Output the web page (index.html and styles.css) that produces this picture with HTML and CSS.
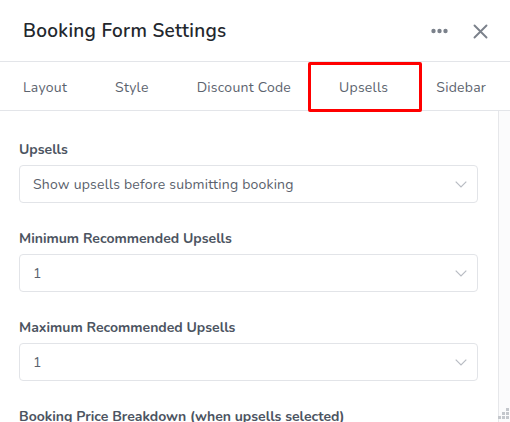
FILE: index.html
```html
<!DOCTYPE html>
<html>
<head>
<meta charset="utf-8">
<link rel="stylesheet" href="styles.css">
</head>
<body>
<div class="panel">
  <header class="header">
    <h1 class="title">Booking Form Settings</h1>
    <div class="actions">
      <svg class="dots" width="17" height="6" viewBox="0 0 17 6"><circle cx="2.5" cy="3" r="2.2" fill="#7b818b"/><circle cx="8.5" cy="3" r="2.2" fill="#7b818b"/><circle cx="14.5" cy="3" r="2.2" fill="#7b818b"/></svg>
      <svg class="close" width="15" height="15" viewBox="0 0 15 15"><path d="M1.5 1.5L13.5 13.5M13.5 1.5L1.5 13.5" stroke="#7b818b" stroke-width="1.9" stroke-linecap="round"/></svg>
    </div>
  </header>
  <nav class="tabs">
    <span class="tab">Layout</span>
    <span class="tab">Style</span>
    <span class="tab">Discount Code</span>
    <span class="tab active">Upsells</span>
    <span class="tab">Sidebar</span>
    <div class="highlight"></div>
  </nav>
  <div class="body">
    <div class="content">
      <div class="field">
        <div class="label">Upsells</div>
        <div class="select"><span>Show upsells before submitting booking</span><svg class="chev" width="12" height="7" viewBox="0 0 12 7"><path d="M0.7 0.7L6 6L11.3 0.7" fill="none" stroke="#b8bcc3" stroke-width="1.2"/></svg></div>
      </div>
      <div class="field">
        <div class="label">Minimum Recommended Upsells</div>
        <div class="select"><span>1</span><svg class="chev" width="12" height="7" viewBox="0 0 12 7"><path d="M0.7 0.7L6 6L11.3 0.7" fill="none" stroke="#b8bcc3" stroke-width="1.2"/></svg></div>
      </div>
      <div class="field">
        <div class="label">Maximum Recommended Upsells</div>
        <div class="select"><span>1</span><svg class="chev" width="12" height="7" viewBox="0 0 12 7"><path d="M0.7 0.7L6 6L11.3 0.7" fill="none" stroke="#b8bcc3" stroke-width="1.2"/></svg></div>
      </div>
      <div class="field">
        <div class="label">Booking Price Breakdown (when upsells selected)</div>
      </div>
    </div>
    <div class="scrolltrack">
      <svg class="grip" width="12" height="12" viewBox="0 0 12 12"><rect x="8" y="0" width="3" height="3" fill="#c4c7cc"/><rect x="4" y="4" width="3" height="3" fill="#c4c7cc"/><rect x="8" y="4" width="3" height="3" fill="#c4c7cc"/><rect x="0" y="8" width="3" height="3" fill="#c4c7cc"/><rect x="4" y="8" width="3" height="3" fill="#c4c7cc"/><rect x="8" y="8" width="3" height="3" fill="#c4c7cc"/></svg>
    </div>
  </div>
</div>
</body>
</html>
```
FILE: styles.css
```css
html, body {
  margin: 0;
  padding: 0;
  background: #ffffff;
}
body {
  font-family: "Nunito", "Open Sans", "Noto Sans", sans-serif;
  width: 510px;
  height: 422px;
  overflow: hidden;
}
.panel {
  display: flex;
  flex-direction: column;
  height: 422px;
}
.header {
  height: 62px;
  box-sizing: border-box;
  display: flex;
  align-items: center;
  justify-content: space-between;
  padding: 0 22px 0 23px;
  border-bottom: 1px solid #e3e5e9;
}
.title {
  margin: 0;
  font-size: 19px;
  font-weight: 600;
  color: #23272d;
  letter-spacing: 0.3px;
}
.actions {
  display: flex;
  align-items: center;
  gap: 25px;
  padding-top: 1px;
}
.tabs {
  position: relative;
  height: 49px;
  box-sizing: border-box;
  display: flex;
  align-items: center;
  border-bottom: 1px solid #e3e5e9;
  padding: 2px 0 0 23px;
  gap: 48px;
}
.tab {
  font-size: 14px;
  color: #5c636e;
  white-space: nowrap;
  letter-spacing: 0.25px;
}
.highlight {
  position: absolute;
  left: 308px;
  top: 0;
  width: 114px;
  height: 50px;
  box-sizing: border-box;
  border: 3px solid #ff0000;
  border-radius: 2px;
}
.body {
  flex: 1;
  display: flex;
  min-height: 0;
}
.content {
  flex: 1;
  padding: 30px 20px 0 19px;
  display: flex;
  flex-direction: column;
  gap: 27px;
  overflow: hidden;
}
.field {
  display: flex;
  flex-direction: column;
  gap: 6px;
}
.label {
  font-size: 14px;
  font-weight: 700;
  color: #4c5461;
  line-height: 18px;
}
.select {
  height: 38px;
  box-sizing: border-box;
  border: 1px solid #e2e4e8;
  border-radius: 4px;
  display: flex;
  align-items: center;
  justify-content: space-between;
  padding: 0 10px 0 13px;
  font-size: 14px;
  color: #5a616c;
  letter-spacing: 0.2px;
}
.chev {
  display: block;
  margin-top: 1px;
}
.scrolltrack {
  width: 11px;
  border-left: 1px solid #e6e7ea;
  background: #fbfbfc;
  display: flex;
  flex-direction: column;
  justify-content: flex-end;
  align-items: flex-end;
}
.grip {
  display: block;
  margin-bottom: 2px;
}
```
